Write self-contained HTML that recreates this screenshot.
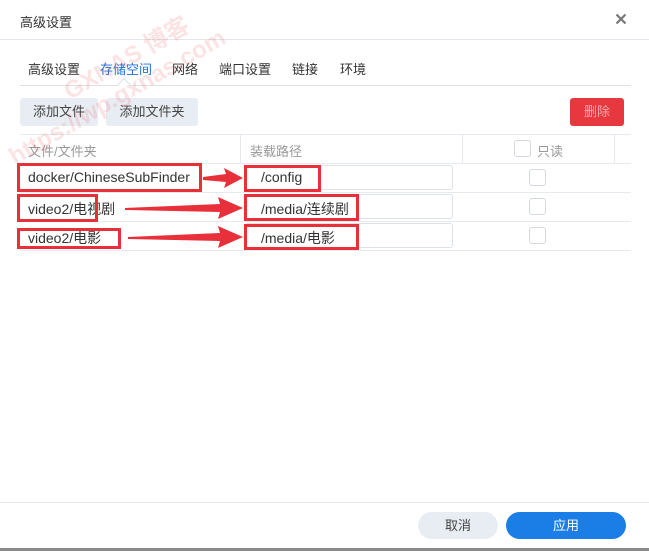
<!DOCTYPE html>
<html><head><meta charset="utf-8"><style>
body{margin:0;width:649px;height:551px;background:#fff;position:relative;overflow:hidden;font-family:"Liberation Sans","Noto Sans CJK SC",sans-serif;color:#333}
.a{position:absolute}
.t{font-size:13px;white-space:nowrap}
.r{font-size:14px;white-space:nowrap}
.btn{position:absolute;background:#e8edf3;border-radius:3px;font-size:13px;color:#444;text-align:center;line-height:28px}
.rb{position:absolute;border:3px solid #e8303a;box-sizing:border-box}
.inp{position:absolute;left:245px;width:208px;height:25px;border:1px solid #dde2e8;border-radius:3px;box-sizing:border-box}
.cb{position:absolute;left:529px;width:17px;height:17px;border:1px solid #d4d9df;border-radius:3px;box-sizing:border-box}
.hl{position:absolute;height:1px;background:#e6e9ed}
</style></head><body>
<div class="a t" style="left:20px;top:12px;color:#333">高级设置</div>
<svg class="a" style="left:615px;top:13px" width="12" height="12"><path d="M1.5 1.5L10.5 10.5M10.5 1.5L1.5 10.5" stroke="#777" stroke-width="2.2"/></svg>
<div class="hl" style="left:0;top:39px;width:649px;background:#e3e6ea"></div>
<div class="a t" style="left:28px;top:59px">高级设置</div>
<div class="a t" style="left:100px;top:59px;color:#1a74d8">存储空间</div>
<div class="a t" style="left:172px;top:59px">网络</div>
<div class="a t" style="left:219px;top:59px">端口设置</div>
<div class="a t" style="left:292px;top:59px">链接</div>
<div class="a t" style="left:340px;top:59px">环境</div>
<div class="hl" style="left:20px;top:85px;width:611px;background:#dde1e6"></div>
<div class="a" style="left:119px;top:80px;width:9px;height:9px;background:#fff;border-left:1px solid #dde1e6;border-top:1px solid #dde1e6;transform:rotate(45deg)"></div>
<div class="btn" style="left:20px;top:98px;width:78px">添加文件</div>
<div class="btn" style="left:106px;top:98px;width:92px">添加文件夹</div>
<div class="btn" style="left:570px;top:98px;width:54px;background:#e8383f;color:#f7a7aa">删除</div>
<div class="hl" style="left:20px;top:134px;width:611px"></div>
<div class="hl" style="left:20px;top:163px;width:611px"></div>
<div class="hl" style="left:20px;top:192px;width:611px"></div>
<div class="hl" style="left:20px;top:221px;width:611px"></div>
<div class="hl" style="left:20px;top:250px;width:611px"></div>
<div class="a" style="left:240px;top:134px;width:1px;height:29px;background:#e6e9ed"></div>
<div class="a" style="left:462px;top:134px;width:1px;height:29px;background:#e6e9ed"></div>
<div class="a" style="left:614px;top:134px;width:1px;height:29px;background:#e6e9ed"></div>
<div class="a t" style="left:28px;top:141px;color:#999">文件/文件夹</div>
<div class="a t" style="left:250px;top:141px;color:#999">装载路径</div>
<div class="cb" style="left:514px;top:140px"></div>
<div class="a t" style="left:537px;top:141px;color:#999">只读</div>
<div class="inp" style="top:165px"></div><div class="inp" style="top:194px"></div><div class="inp" style="top:223px"></div>
<div class="cb" style="top:169px"></div><div class="cb" style="top:198px"></div><div class="cb" style="top:227px"></div>
<div class="a r" style="left:28px;top:169px">docker/ChineseSubFinder</div>
<div class="a r" style="left:28px;top:199px">video2/电视剧</div>
<div class="a r" style="left:28px;top:228px">video2/电影</div>
<div class="a r" style="left:261px;top:169px">/config</div>
<div class="a r" style="left:261px;top:199px">/media/连续剧</div>
<div class="a r" style="left:261px;top:228px">/media/电影</div>
<div class="rb" style="left:17px;top:163px;width:185px;height:29px"></div>
<div class="rb" style="left:244px;top:165px;width:77px;height:27px"></div>
<div class="rb" style="left:17px;top:194px;width:81px;height:28px"></div>
<div class="rb" style="left:244px;top:194px;width:115px;height:27px"></div>
<div class="rb" style="left:17px;top:228px;width:104px;height:21px"></div>
<div class="rb" style="left:244px;top:224px;width:115px;height:26px"></div>
<svg class="a" style="left:0;top:0" width="649" height="551">
<polygon points="203,177 226,174 224,168 243,178 224,188 226,182 203,180" fill="#e8303a"/>
<polygon points="125,208 220,204 218,197 243,208 218,219 220,212 125,210" fill="#e8303a"/>
<polygon points="128,237 220,233 218,226 243,237 218,248 220,241 128,239" fill="#e8303a"/>
<g fill="#e8303a" opacity="0.13" font-family="Liberation Sans,Noto Sans CJK SC,sans-serif" font-weight="bold">
<text x="70" y="100" font-size="24" transform="rotate(-30 70 100)">GXNAS 博客</text>
<text x="15" y="165" font-size="24" transform="rotate(-30 15 165)">https://wp.gxnas.com</text>
</g>
</svg>
<div class="hl" style="left:0;top:502px;width:649px;background:#e3e6ea"></div>
<div class="btn" style="left:418px;top:512px;width:80px;height:27px;line-height:27px;border-radius:14px">取消</div>
<div class="btn" style="left:506px;top:512px;width:120px;height:27px;line-height:27px;border-radius:14px;background:#1a7ee6;color:#fff">应用</div>
<div class="a" style="left:0;top:548px;width:649px;height:3px;background:#8a8a8a"></div>
</body></html>
